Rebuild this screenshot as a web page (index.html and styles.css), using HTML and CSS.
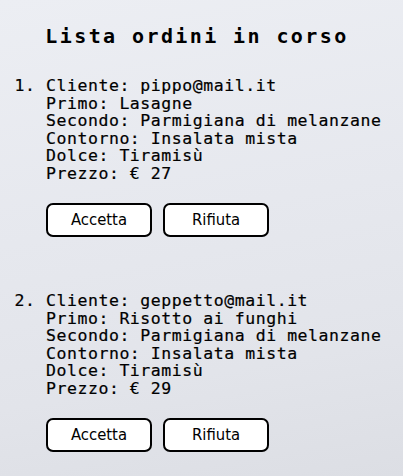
FILE: index.html
```html
<!DOCTYPE html>
<html lang="it">
<head>
<meta charset="utf-8">
<title>Lista ordini in corso</title>
<link rel="stylesheet" href="styles.css">
</head>
<body>
<h1 class="title">Lista ordini in corso</h1>
<ol class="orders">
  <li class="order">
    <div class="line">Cliente: pippo@mail.it</div>
    <div class="line">Primo: Lasagne</div>
    <div class="line">Secondo: Parmigiana di melanzane</div>
    <div class="line">Contorno: Insalata mista</div>
    <div class="line">Dolce: Tiramisù</div>
    <div class="line">Prezzo: € 27</div>
    <div class="actions">
      <button class="btn">Accetta</button>
      <button class="btn">Rifiuta</button>
    </div>
  </li>
  <li class="order">
    <div class="line">Cliente: geppetto@mail.it</div>
    <div class="line">Primo: Risotto ai funghi</div>
    <div class="line">Secondo: Parmigiana di melanzane</div>
    <div class="line">Contorno: Insalata mista</div>
    <div class="line">Dolce: Tiramisù</div>
    <div class="line">Prezzo: € 29</div>
    <div class="actions">
      <button class="btn">Accetta</button>
      <button class="btn">Rifiuta</button>
    </div>
  </li>
</ol>
</body>
</html>
```
FILE: styles.css
```css
html {
  height: 100%;
  background: linear-gradient(170deg, #eceef3 0%, #e6e8ee 45%, #e2e4ea 75%, #dcdee4 100%);
}
body {
  margin: 0;
  padding: 0;
  font-family: "DejaVu Sans Mono", monospace;
  color: #000;
}
.title {
  margin: 0;
  padding: 25px 9px 0 0;
  text-align: center;
  font-family: "DejaVu Sans Mono", monospace;
  font-weight: bold;
  font-size: 20px;
  letter-spacing: 2.4px;
  line-height: 22px;
}
.orders {
  margin: 30px 0 0 0;
  padding-left: 46px;
  font-size: 16.5px;
  letter-spacing: 0.55px;
  line-height: 17.6px;
  -webkit-text-stroke: 0.2px #000;
}
.order {
  padding-bottom: 55.5px;
}
.order:last-child {
  padding-bottom: 0;
}
.actions {
  display: flex;
  gap: 11px;
  margin-top: 20px;
  -webkit-text-stroke: 0;
}
.btn {
  width: 106px;
  height: 34px;
  background: #fff;
  border: 2px solid #000;
  border-radius: 7px;
  font-family: "DejaVu Sans Condensed", "DejaVu Sans", sans-serif;
  font-size: 16.5px;
  letter-spacing: 0;
  color: #000;
  padding: 0;
}
```
